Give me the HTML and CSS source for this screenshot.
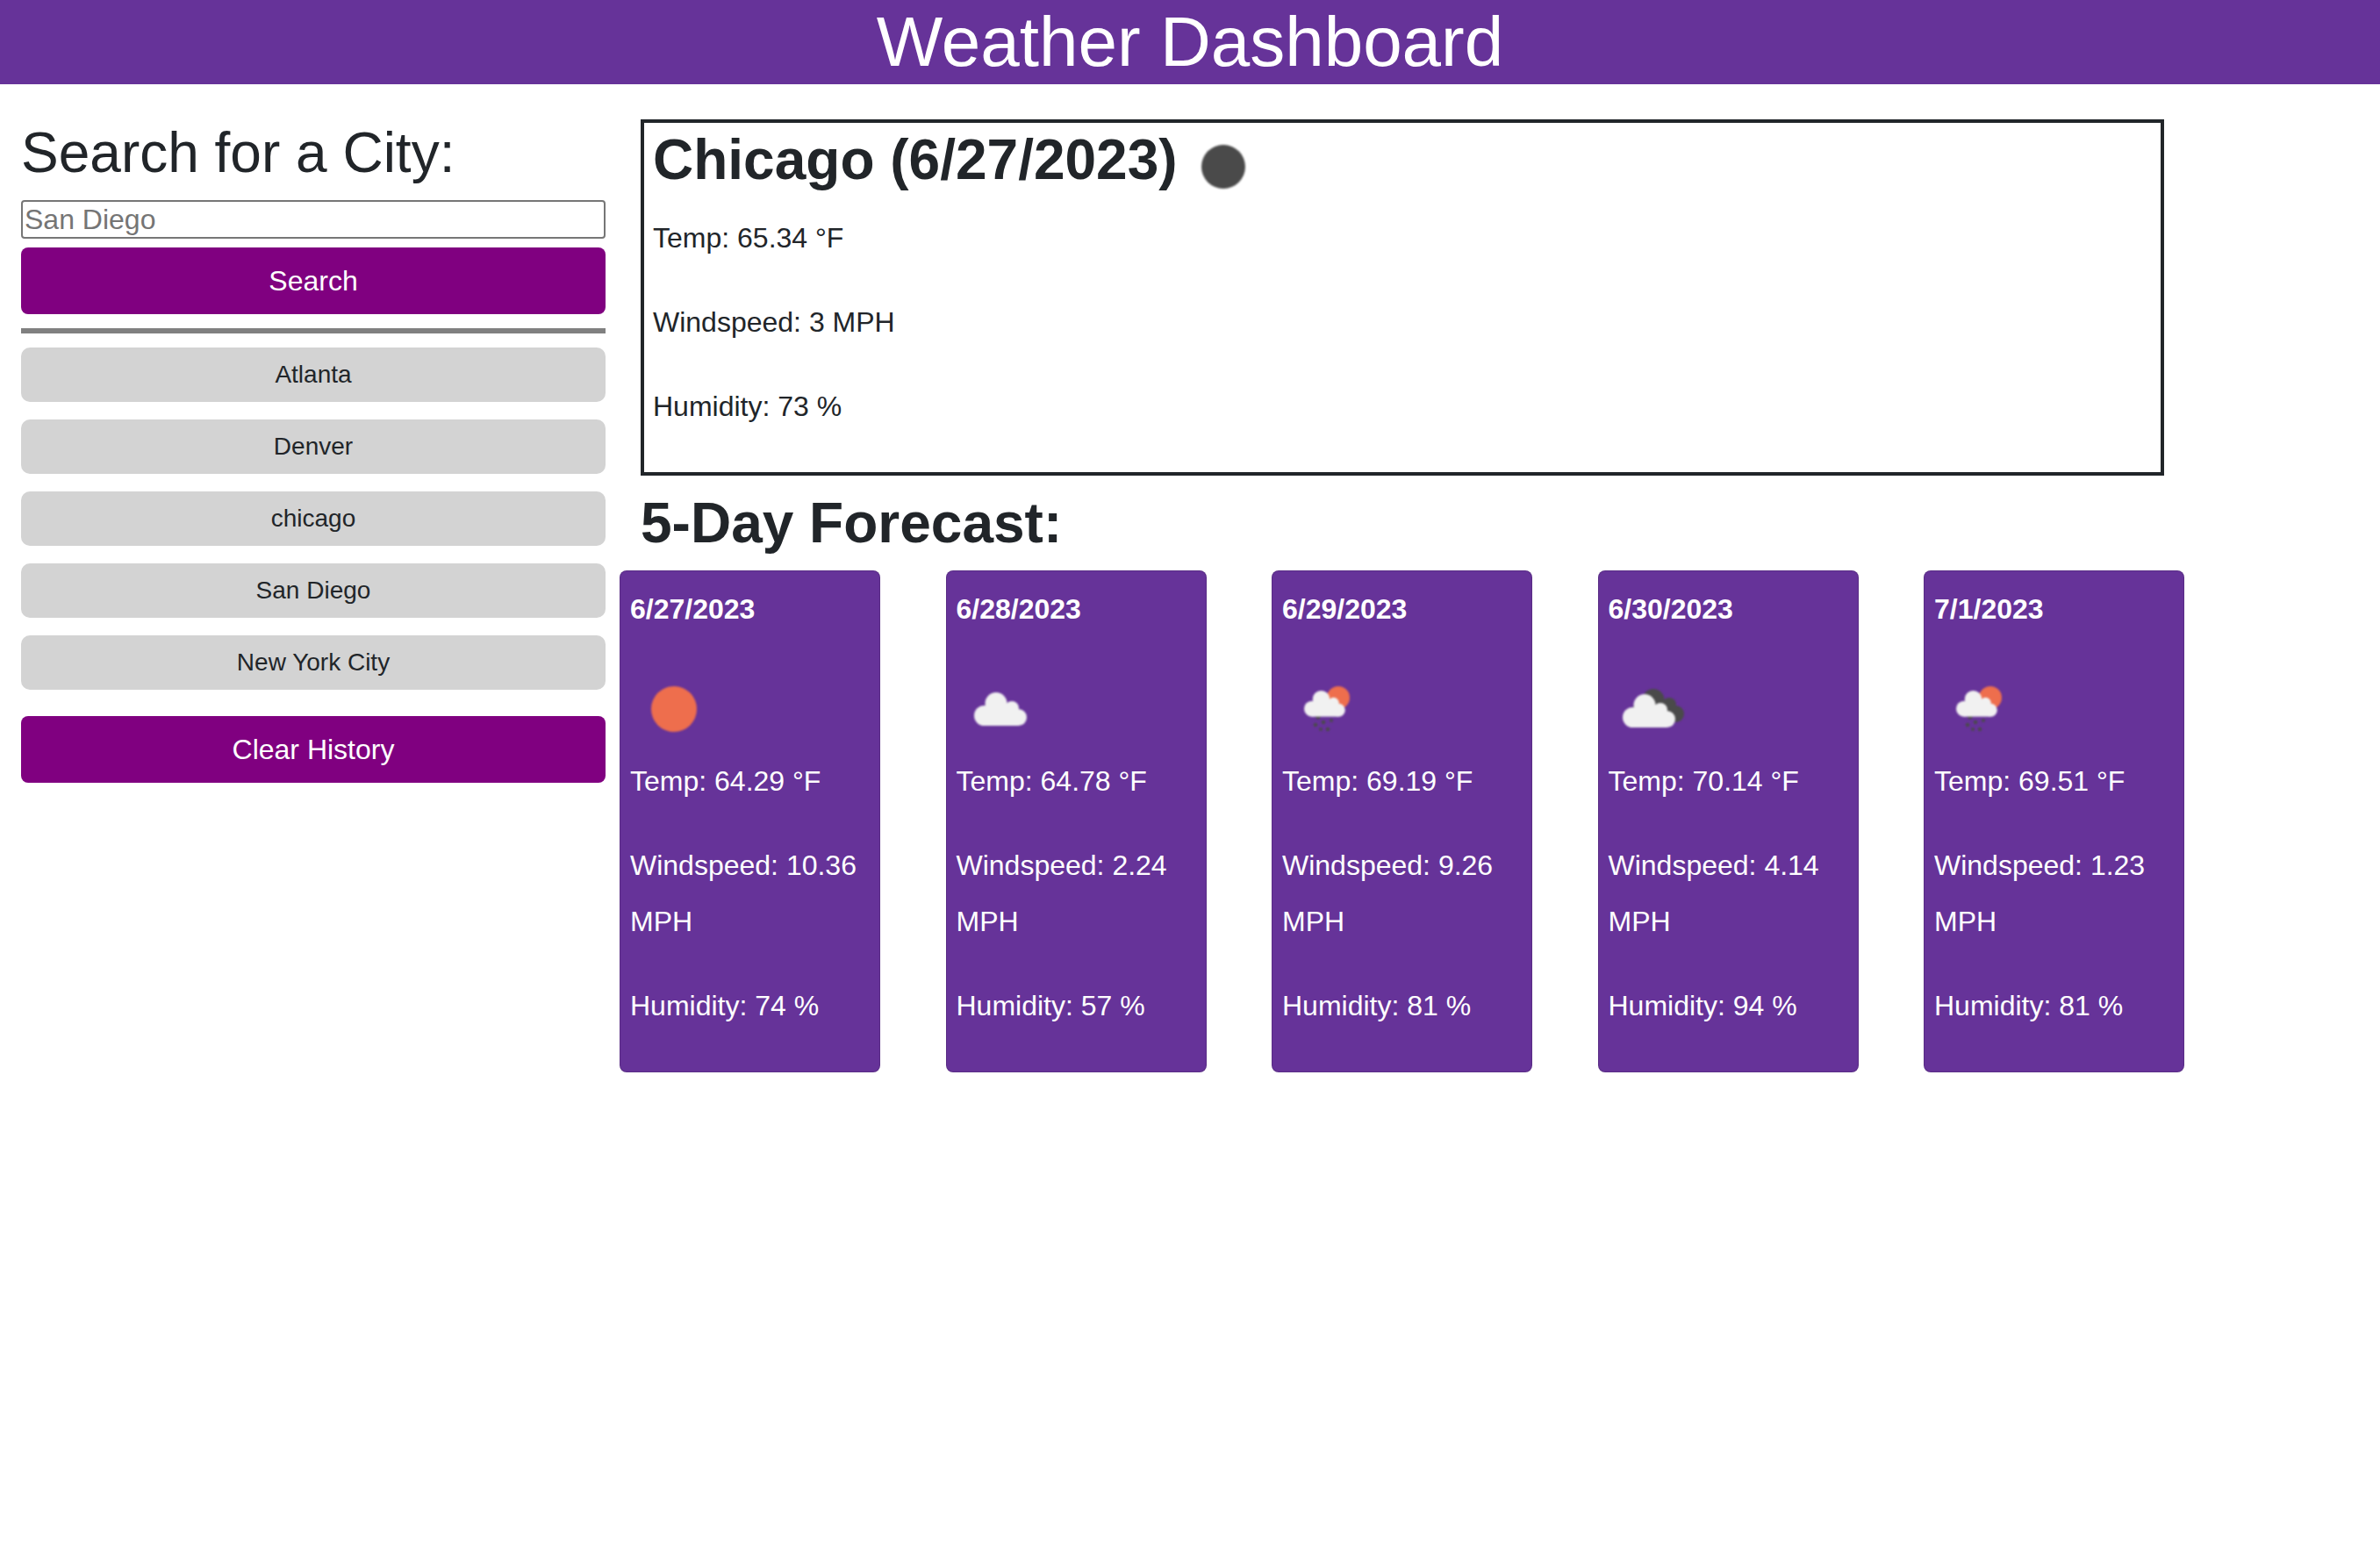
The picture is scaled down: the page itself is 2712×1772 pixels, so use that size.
FILE: index.html
```html
<!DOCTYPE html>
<html lang="en">
<head>
    <meta charset="UTF-8">
    <meta name="viewport" content="width=device-width, initial-scale=1.0">
    <title>Weather Dashboard</title>
    <link rel="stylesheet" href="styles.css">
</head>
<body>
    <header>
        <h1>Weather Dashboard</h1>
    </header>

    <div id="main-content">
        <aside id="searchPanel">
            <h2>Search for a City:</h2>
            <input type="text" id="cityInput" placeholder="San Diego">
            <button class="btn-purple" id="searchBtn">Search</button>
            <hr>
            <div id="historyList">
                <button class="btn-history">Atlanta</button>
                <button class="btn-history">Denver</button>
                <button class="btn-history">chicago</button>
                <button class="btn-history">San Diego</button>
                <button class="btn-history">New York City</button>
            </div>
            <button class="btn-purple" id="clearBtn">Clear History</button>
        </aside>

        <section id="weatherPanel">
            <div id="currentWeather">
                <div class="current-title">
                    <h2>Chicago (6/27/2023)</h2>
                    <svg class="icon" viewBox="0 0 100 100"><circle cx="50" cy="50" r="25" fill="#4a4a4a"/></svg>
                </div>
                <p>Temp: 65.34 °F</p>
                <p>Windspeed: 3 MPH</p>
                <p>Humidity: 73 %</p>
            </div>

            <h2 id="forecastTitle">5-Day Forecast:</h2>

            <div id="forecastList">
                <div class="card">
                    <p class="card-date">6/27/2023</p>
                    <svg class="icon" viewBox="0 0 100 100"><circle cx="50" cy="50" r="26" fill="#ee6e4d"/></svg>
                    <p>Temp: 64.29 °F</p>
                    <p>Windspeed: 10.36 MPH</p>
                    <p>Humidity: 74 %</p>
                </div>
                <div class="card">
                    <p class="card-date">6/28/2023</p>
                    <svg class="icon" viewBox="0 0 100 100">
                        <g fill="#f1f1f1" transform="translate(20 31)">
                            <circle cx="11.5" cy="26.5" r="11.5"/><circle cx="25" cy="12.5" r="12.5"/>
                            <circle cx="43" cy="18" r="8"/><circle cx="50.5" cy="28.5" r="9.5"/><rect x="11" y="18" width="39" height="20"/>
                        </g>
                    </svg>
                    <p>Temp: 64.78 °F</p>
                    <p>Windspeed: 2.24 MPH</p>
                    <p>Humidity: 57 %</p>
                </div>
                <div class="card">
                    <p class="card-date">6/29/2023</p>
                    <svg class="icon" viewBox="0 0 100 100">
                        <circle cx="64" cy="37" r="13" fill="#ee6e4d"/>
                        <g fill="#4a4a4a">
                            <circle cx="41" cy="59" r="2.6"/><circle cx="47" cy="65" r="2.2"/><circle cx="38" cy="68" r="2.2"/>
                            <circle cx="56" cy="63" r="1.9"/><circle cx="52" cy="73" r="2.2"/><circle cx="44" cy="73" r="1.9"/>
                        </g>
                        <g fill="#f1f1f1" transform="translate(25 29) scale(.78)">
                            <circle cx="11.5" cy="26.5" r="11.5"/><circle cx="25" cy="12.5" r="12.5"/>
                            <circle cx="43" cy="18" r="8"/><circle cx="50.5" cy="28.5" r="9.5"/><rect x="11" y="18" width="39" height="20"/>
                        </g>
                    </svg>
                    <p>Temp: 69.19 °F</p>
                    <p>Windspeed: 9.26 MPH</p>
                    <p>Humidity: 81 %</p>
                </div>
                <div class="card">
                    <p class="card-date">6/30/2023</p>
                    <svg class="icon" viewBox="0 0 100 100">
                        <g fill="#4a4a4a" transform="translate(26 27)">
                            <circle cx="11.5" cy="26.5" r="11.5"/><circle cx="25" cy="12.5" r="12.5"/>
                            <circle cx="43" cy="18" r="8"/><circle cx="50.5" cy="28.5" r="9.5"/><rect x="11" y="18" width="39" height="20"/>
                        </g>
                        <g fill="#f1f1f1" transform="translate(16 33)">
                            <circle cx="11.5" cy="26.5" r="11.5"/><circle cx="25" cy="12.5" r="12.5"/>
                            <circle cx="43" cy="18" r="8"/><circle cx="50.5" cy="28.5" r="9.5"/><rect x="11" y="18" width="39" height="20"/>
                        </g>
                    </svg>
                    <p>Temp: 70.14 °F</p>
                    <p>Windspeed: 4.14 MPH</p>
                    <p>Humidity: 94 %</p>
                </div>
                <div class="card">
                    <p class="card-date">7/1/2023</p>
                    <svg class="icon" viewBox="0 0 100 100">
                        <circle cx="64" cy="37" r="13" fill="#ee6e4d"/>
                        <g fill="#4a4a4a">
                            <circle cx="41" cy="59" r="2.6"/><circle cx="47" cy="65" r="2.2"/><circle cx="38" cy="68" r="2.2"/>
                            <circle cx="56" cy="63" r="1.9"/><circle cx="52" cy="73" r="2.2"/><circle cx="44" cy="73" r="1.9"/>
                        </g>
                        <g fill="#f1f1f1" transform="translate(25 29) scale(.78)">
                            <circle cx="11.5" cy="26.5" r="11.5"/><circle cx="25" cy="12.5" r="12.5"/>
                            <circle cx="43" cy="18" r="8"/><circle cx="50.5" cy="28.5" r="9.5"/><rect x="11" y="18" width="39" height="20"/>
                        </g>
                    </svg>
                    <p>Temp: 69.51 °F</p>
                    <p>Windspeed: 1.23 MPH</p>
                    <p>Humidity: 81 %</p>
                </div>
            </div>
        </section>
    </div>
</body>
</html>
```

FILE: styles.css
```css
/* General Reset */
* {
    margin: 0;
    padding: 0;
    box-sizing: border-box;
    font-family: 'Liberation Sans', Arial, sans-serif;
}

body {
    background: #fff;
    color: #212529;
    font-size: 32px;
    line-height: 64px;
}

header {
    background: #663399;
    color: #fff;
    height: 96px;
    text-align: center;
}

header h1 {
    font-size: 80px;
    font-weight: 400;
    line-height: 96px;
}

#main-content {
    display: flex;
    padding: 40px 0 0 24px;
}

h2 {
    font-size: 64px;
    line-height: 77px;
}

p {
    margin-bottom: 32px;
}

/* Search column */
#searchPanel {
    flex: 0 0 666px;
}

#searchPanel h2 {
    font-weight: 400;
    margin-bottom: 15px;
}

#cityInput {
    display: block;
    width: 100%;
    height: 44px;
    border: 2px solid #767676;
    border-radius: 4px;
    padding: 0 2px;
    font-size: 32px;
    margin-bottom: 10px;
}

#cityInput::placeholder {
    color: #757575;
}

button {
    display: block;
    width: 100%;
    border: none;
    border-radius: 8px;
    text-align: center;
}

.btn-purple {
    background: #800080;
    color: #fff;
    font-size: 32px;
    height: 76px;
}

hr {
    border: none;
    background: #808080;
    height: 6px;
    margin: 16px 0;
}

.btn-history {
    background: #d3d3d3;
    color: #212529;
    font-size: 28px;
    height: 62px;
    border-radius: 10px;
    margin-bottom: 20px;
}

#clearBtn {
    margin-top: 30px;
}

/* Weather column */
#weatherPanel {
    flex: 0 0 1784px;
    margin-left: 16px;
}

#currentWeather {
    border: 4px solid #212529;
    margin: 0 24px;
    padding: 0 10px 10px;
    height: 406px;
}

.current-title {
    display: flex;
    align-items: flex-start;
    height: 99px;
}

.current-title h2 {
    margin-top: 4px;
}

.current-title .icon {
    margin-left: 2px;
}

.icon {
    display: block;
    width: 100px;
    height: 100px;
    filter: blur(0.8px);
    flex-shrink: 0;
}

#forecastTitle {
    margin: 16px 24px 15px;
}

#forecastList {
    display: flex;
    justify-content: space-between;
    margin-right: 1px;
}

.card {
    width: 297px;
    background: #663399;
    color: #fff;
    border: 1px solid rgba(0, 0, 0, 0.125);
    border-radius: 8px;
    padding: 11px;
}

.card-date {
    font-weight: 700;
}
```
